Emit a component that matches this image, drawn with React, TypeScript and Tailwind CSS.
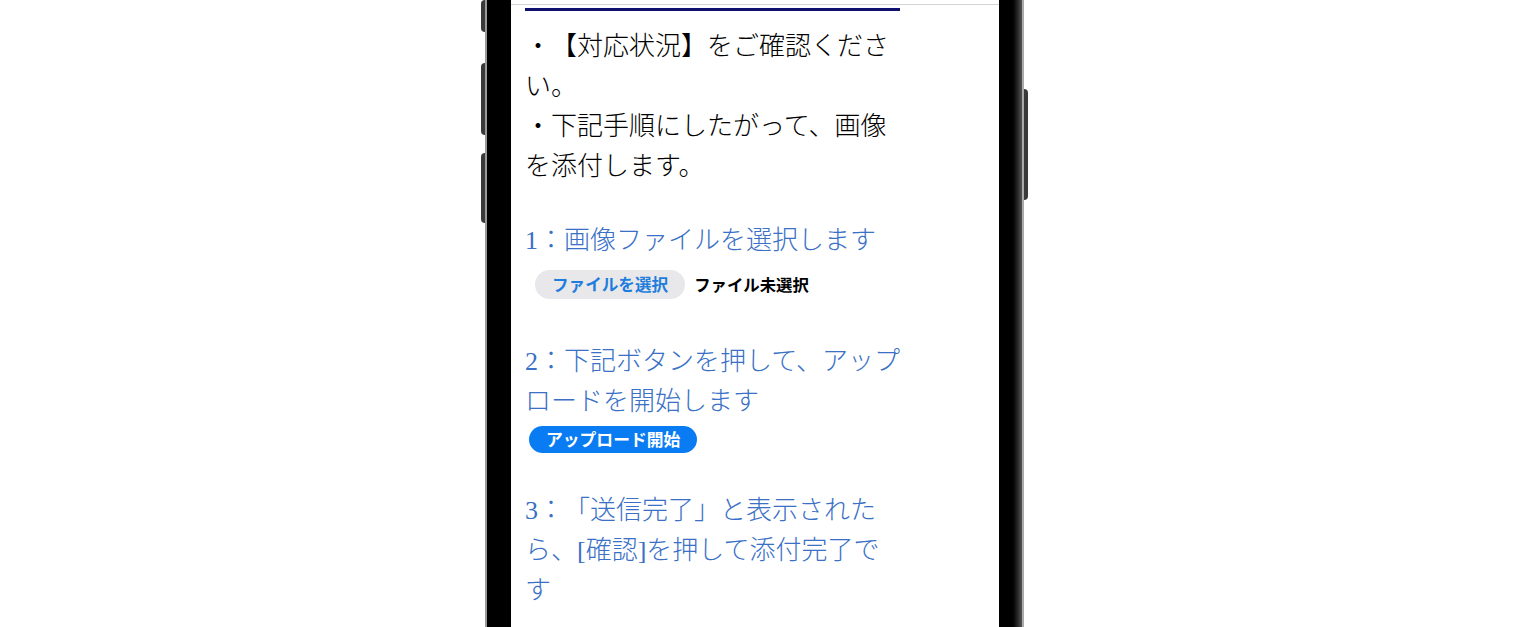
import React from 'react';

const serif = { fontFamily: '"Liberation Serif", "Noto Sans CJK JP", serif' };
const sans = { fontFamily: '"Noto Sans CJK JP", "Liberation Sans", sans-serif' };

function StepTitle({ children }: { children: React.ReactNode }) {
  return (
    <p className="text-[26px] leading-[40px] text-[#3a70c6] font-light [text-spacing-trim:space-all]" style={serif}>
      {children}
    </p>
  );
}

export default function App() {
  return (
    <div className="h-[627px] w-full overflow-hidden bg-white">
      <div className="flex ml-[481px] h-full">
        {/* 左側のボタン */}
        <div className="w-[4px] flex flex-col">
          <div className="h-[32px] bg-[#3a3a3a] rounded-l-sm" />
          <div className="h-[31px]" />
          <div className="h-[72px] bg-[#3a3a3a] rounded-l-sm" />
          <div className="h-[18px]" />
          <div className="h-[70px] bg-[#3a3a3a] rounded-l-sm" />
        </div>

        {/* 本体 */}
        <div className="flex h-full bg-black border-l-2 border-[#9a9a9a]">
          <div className="w-[24px]" />
          <div className="w-[488px] h-full bg-white">
            <div className="h-[4px]" />
            <div className="h-px bg-[#d4d4d4]" />
            <div className="pl-[14px]">
              <div className="h-[3px]" />
              <div className="w-[375px] h-[3px] bg-[#10106e]" />

              <div className="w-[380px] mt-[16px]">
                <p className="text-[26px] leading-[40px] text-black font-light [text-spacing-trim:space-all]" style={serif}>
                  ・【対応状況】をご確認ください。
                  <br />
                  ・下記手順にしたがって、画像を添付します。
                </p>

                <div className="mt-[34px]">
                  <StepTitle>1：画像ファイルを選択します</StepTitle>
                  <div className="flex items-center gap-[9px] mt-[9px] ml-[10px]" style={sans}>
                    <span className="h-[29px] px-[17px] flex items-center rounded-full bg-[#e8e8ea] text-[#1f7ddd] text-[16.6px] font-bold">
                      ファイルを選択
                    </span>
                    <span className="text-[16.4px] font-bold text-black">ファイル未選択</span>
                  </div>
                </div>

                <div className="mt-[43px]">
                  <StepTitle>2：下記ボタンを押して、アップロードを開始します</StepTitle>
                  <div className="mt-[4px] ml-[4px]" style={sans}>
                    <span className="inline-flex h-[27px] px-[17px] items-center rounded-full bg-[#0a7cf3] text-white text-[16.8px] font-bold">
                      アップロード開始
                    </span>
                  </div>
                </div>

                <div className="mt-[38px]">
                  <StepTitle>3：「送信完了」と表示されたら、[確認]を押して添付完了です</StepTitle>
                </div>
              </div>
            </div>
          </div>
          <div className="w-[23px] bg-gradient-to-r from-black via-black to-[#555]" />
          <div className="w-[2px] bg-[#aaa]" />
        </div>

        {/* 右側のボタン */}
        <div className="w-[4px] flex flex-col">
          <div className="h-[89px]" />
          <div className="h-[111px] bg-[#3a3a3a] rounded-r-sm" />
        </div>
      </div>
    </div>
  );
}
